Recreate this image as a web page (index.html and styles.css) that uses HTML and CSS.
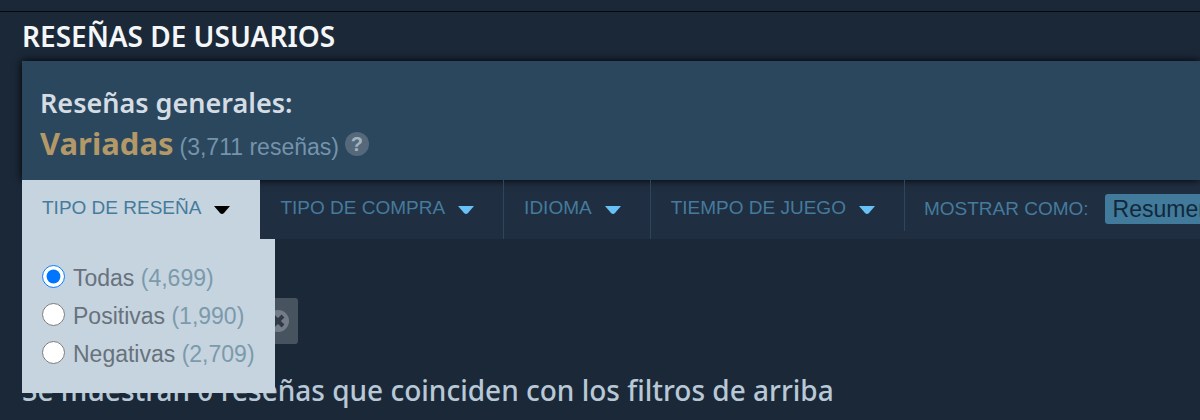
FILE: index.html
```html
<!DOCTYPE html>
<html lang="es">
<head>
    <meta charset="utf-8">
    <title>Reseñas de usuarios</title>
    <link rel="stylesheet" href="styles.css">
</head>
<body>
<main class="reviews">
    <h2 class="title">RESEÑAS DE USUARIOS</h2>
    <section class="summary">
        <h3 class="summary-title">Reseñas generales:</h3>
        <div class="summary-row">
            <span class="score">Variadas</span>
            <span class="count">(3,711 reseñas)</span>
            <button type="button" class="help">?</button>
        </div>
    </section>
    <div class="filters">
        <div class="filter active">
            <button type="button" class="filter-btn">TIPO DE RESEÑA
                <svg class="arrow" viewBox="0 0 18 10"><path d="M1 1H17L11 8Q9 10 7 8Z"/></svg>
            </button>
            <div class="menu">
                <label class="option"><input type="radio" name="type" checked><span>Todas <span class="num">(4,699)</span></span></label>
                <label class="option"><input type="radio" name="type"><span>Positivas <span class="num">(1,990)</span></span></label>
                <label class="option"><input type="radio" name="type"><span>Negativas <span class="num">(2,709)</span></span></label>
            </div>
        </div>
        <div class="filter">
            <button type="button" class="filter-btn">TIPO DE COMPRA
                <svg class="arrow" viewBox="0 0 18 10"><path d="M1 1H17L11 8Q9 10 7 8Z"/></svg>
            </button>
        </div>
        <div class="filter">
            <button type="button" class="filter-btn">IDIOMA
                <svg class="arrow" viewBox="0 0 18 10"><path d="M1 1H17L11 8Q9 10 7 8Z"/></svg>
            </button>
        </div>
        <div class="filter last">
            <button type="button" class="filter-btn">TIEMPO DE JUEGO
                <svg class="arrow" viewBox="0 0 18 10"><path d="M1 1H17L11 8Q9 10 7 8Z"/></svg>
            </button>
        </div>
        <div class="display">
            <label for="display">MOSTRAR COMO:</label>
            <select id="display">
                <option>Resumen</option>
            </select>
        </div>
    </div>
    <div class="tags">
        <button type="button" class="tag">
            <svg class="close" viewBox="0 0 22 22"><circle cx="11" cy="11" r="11"/><path d="M6 6L16 16M16 6L6 16"/></svg>
        </button>
    </div>
    <p class="result">Se muestran 0 reseñas que coinciden con los filtros de arriba</p>
</main>
</body>
</html>
```
FILE: styles.css
```css
* {
    box-sizing: border-box;
}

body {
    margin: 0;
    padding-top: 11px;
    overflow: hidden;
    background-color: #1b2838;
    font-family: "Liberation Sans", Arial, sans-serif;
    font-size: 23px;
}

button,
select {
    border: 0;
    font-family: inherit;
    cursor: pointer;
}

.reviews {
    padding-left: 22px;
    border-top: 1px solid #05080d;
}

.title {
    margin: 0;
    font: 600 28px/49px "Noto Sans", sans-serif;
    color: #f4f6f8;
}

.summary {
    position: relative;
    padding: 24px 18px 14px;
    background-color: #2a475e;
    box-shadow: 0 0 8px #000;
}

.summary-title {
    margin: 0;
    font: 600 27px/36px "Noto Sans", sans-serif;
    color: #d5dde4;
}

.summary-row {
    display: flex;
    align-items: center;
    gap: 6px;
    height: 45px;
}

.score {
    font: 700 31px/43px "Noto Sans", sans-serif;
    color: #b39868;
}

.count {
    padding-top: 8px;
    color: #7593ab;
}

.help {
    width: 24px;
    height: 24px;
    padding: 0;
    border-radius: 50%;
    background-color: #55697b;
    color: #a3b3c0;
    font-size: 20px;
    font-weight: bold;
    line-height: 24px;
}

/* filter bar */
.filters {
    display: flex;
    height: 59px;
    background-color: #1f2e41;
}

.filter {
    position: relative;
    border-right: 1px solid #2a475e;
}

.last {
    height: 51px;
}

.filter-btn {
    display: flex;
    align-items: center;
    gap: 12px;
    height: 56px;
    padding: 0 28px 0 20px;
    background: none;
    color: #457b9c;
    font-size: 19px;
    white-space: nowrap;
}

.arrow {
    width: 18px;
    height: 10px;
    margin-top: 3px;
    fill: #67c1f5;
}

.active {
    z-index: 2;
    border-color: #c6d4df;
    background-color: #c6d4df;
}

.active .arrow {
    fill: #000;
}

.menu {
    position: absolute;
    top: 59px;
    left: 0;
    padding: 20px;
    background-color: #c6d4df;
    white-space: nowrap;
}

.option {
    display: flex;
    align-items: center;
    gap: 8px;
    height: 38px;
    color: #67727c;
}

.option input {
    width: 23px;
    height: 23px;
    margin: 0 0 3px;
}

.num {
    color: #7b9aac;
}

.display {
    display: flex;
    align-items: center;
    flex: none;
    gap: 16px;
    height: 57px;
    padding-left: 19px;
    color: #457b9c;
    font-size: 19px;
}

.display select {
    appearance: none;
    width: 120px;
    height: 30px;
    padding: 0 8px;
    border-radius: 3px;
    background-color: #417a9b;
    color: #12283a;
    font-size: 23px;
}

.tags {
    display: flex;
    padding-top: 59px;
}

.tag {
    display: flex;
    align-items: center;
    justify-content: flex-end;
    width: 276px;
    height: 46px;
    padding: 0 9px;
    border-radius: 3px;
    background-color: #485360;
}

.close {
    width: 22px;
    height: 22px;
    fill: #747d87;
    stroke: #303a47;
    stroke-width: 4;
}

.close circle {
    stroke: none;
}

.result {
    margin: 28px 0 0;
    font: 500 28px/36px "Noto Sans", sans-serif;
    color: #b8c8d6;
    white-space: nowrap;
}
```
